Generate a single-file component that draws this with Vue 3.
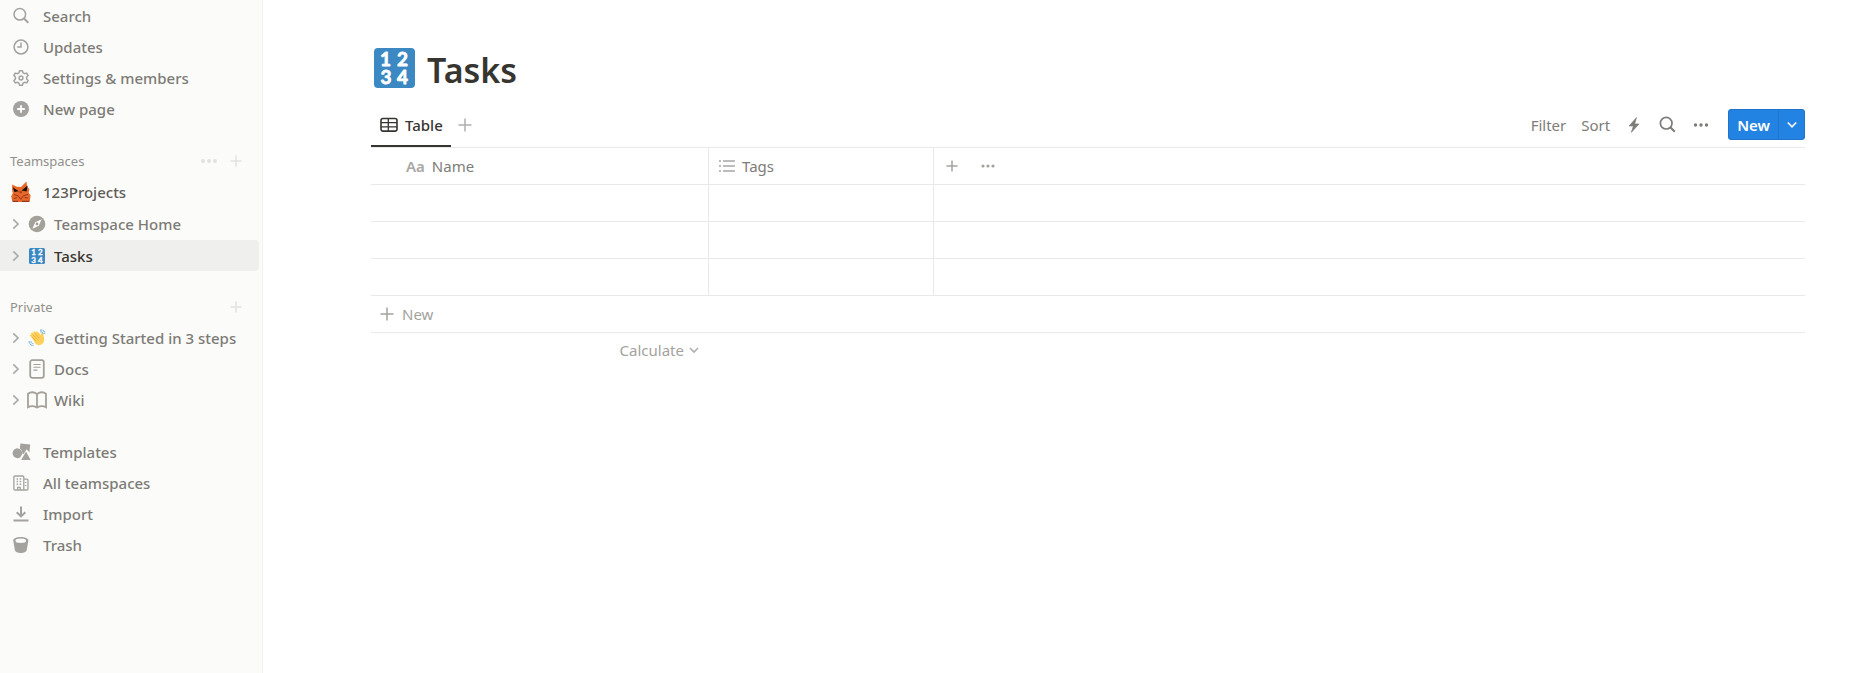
<script setup>
import { ref } from 'vue'

const primary = [
  { label: 'Search', icon: 'search' },
  { label: 'Updates', icon: 'clock' },
  { label: 'Settings & members', icon: 'gear' },
  { label: 'New page', icon: 'plusCircle' },
]
const teamPages = [
  { label: 'Teamspace Home', icon: 'compass' },
  { label: 'Tasks', icon: 'numbers', active: true },
]
const privatePages = [
  { label: 'Getting Started in 3 steps', icon: 'wave' },
  { label: 'Docs', icon: 'doc' },
  { label: 'Wiki', icon: 'book' },
]
const utilities = [
  { label: 'Templates', icon: 'shapes' },
  { label: 'All teamspaces', icon: 'building' },
  { label: 'Import', icon: 'download' },
  { label: 'Trash', icon: 'trash' },
]
const rows = ref([1, 2, 3])
function addRow() {
  rows.value.push(rows.value.length + 1)
}
</script>

<template>
  <div class="app">
    <aside class="sidebar">
      <nav class="group" aria-label="Workspace">
        <a v-for="item in primary" :key="item.label" href="#" class="row link">
          <span class="icon">
            <svg v-if="item.icon === 'search'" width="18" height="18" viewBox="0 0 18 18" class="line">
              <circle cx="7.8" cy="7.3" r="5.8" /><path d="M12 11.500l4.300 4.300" stroke-width="2" />
            </svg>
            <svg v-else-if="item.icon === 'clock'" width="18" height="18" viewBox="0 0 18 18" class="line">
              <circle cx="9" cy="9" r="6.900" /><path d="M9 4.600V9H5.200" />
            </svg>
            <svg v-else-if="item.icon === 'gear'" width="18" height="18" viewBox="0 0 18 18" class="line">
              <path d="M7.600 1.700h2.800l.6 2.100 1.500.9 2.200-.6 1.400 2.400-1.500 1.600v1.800l1.500 1.600-1.400 2.400-2.200-.6-1.500.9-.6 2.100H7.600L7 14.200l-1.500-.9-2.200.6-1.400-2.400 1.500-1.600V8.100L1.900 6.500l1.400-2.400 2.200.6L7 3.800z" stroke-linejoin="round" />
              <circle cx="9" cy="9" r="1.900" />
            </svg>
            <svg v-else width="18" height="18" viewBox="0 0 18 18">
              <circle cx="9" cy="9" r="8" fill="#a3a29e" /><path d="M9 5.200v7.600M5.200 9h7.600" stroke="#fff" stroke-width="1.800" />
            </svg>
          </span>
          <span>{{ item.label }}</span>
        </a>
      </nav>

      <section class="group team" aria-label="Teamspaces">
        <div class="heading">
          <h2>Teamspaces</h2>
          <button type="button" aria-label="Teamspace options">
            <svg width="18" height="14" viewBox="0 0 18 14" fill="currentColor"><circle cx="3" cy="7" r="2" /><circle cx="9" cy="7" r="2" /><circle cx="15" cy="7" r="2" /></svg>
          </button>
          <button type="button" aria-label="Add teamspace">
            <svg width="14" height="14" viewBox="0 0 14 14" class="plus"><path d="M7 1.500v11M1.500 7h11" /></svg>
          </button>
        </div>
        <a href="#" class="row link project">
          <span class="icon">
            <svg width="22" height="22" viewBox="0 0 22 22">
              <path d="M2.200 3.600l4.600 2.200 4.200.2L16.400.6l.7 4.600 2.200 3-.6 3.800 1.900 2.200-.9 6.800H2.400L1.200 15.200l1.600-3L2 8.800z" fill="#e8682c" />
              <path d="M2.800 6.200l6 4-4.400.8zM17.600 4.400l-6 5.200 5 .8z" fill="#161010" />
              <path d="M9.600 10.800h2.200l-1.100 1.400zM4 13.600l4.200 1.200 2.600 3.600 2.600-3.600 4.800-1.400M3.800 17.600l3.200-1M18 17.200l-3.400-.8" fill="none" stroke="#973817" stroke-width="1" />
              <path d="M3 20.400h5M12 20.400h7" stroke="#8d3b1c" stroke-width="1.200" />
            </svg>
          </span>
          <span>123Projects</span>
        </a>
        <div v-for="page in teamPages" :key="page.label" class="row page" :class="{ active: page.active }">
          <button type="button" class="toggle" :aria-label="'Expand ' + page.label">
            <svg width="8" height="12" viewBox="0 0 8 12"><path d="M1.300 1.300L6 6l-4.700 4.700" /></svg>
          </button>
          <a href="#" class="link">
            <span class="page-icon">
              <svg v-if="page.icon === 'compass'" width="18" height="18" viewBox="0 0 18 18">
                <circle cx="9" cy="9" r="8.300" fill="#a4a199" /><path d="M13.600 4.200l-2.800 6.600-6.400 3 2.800-6.600z" fill="#fff" /><circle cx="9" cy="9" r="1.400" fill="#a4a199" />
              </svg>
              <svg v-else width="18" height="18" viewBox="0 0 18 18" class="digits small">
                <rect x="1" y="1" width="16" height="16" rx="1.600" />
                <text x="5.600" y="8.200">1</text><text x="12.400" y="8.200">2</text><text x="5.600" y="15.800">3</text><text x="12.400" y="15.800">4</text>
              </svg>
            </span>
            <span>{{ page.label }}</span>
          </a>
        </div>
      </section>

      <section class="group" aria-label="Private">
        <div class="heading">
          <h2>Private</h2>
          <button type="button" aria-label="Add private page">
            <svg width="14" height="14" viewBox="0 0 14 14" class="plus"><path d="M7 1.500v11M1.500 7h11" /></svg>
          </button>
        </div>
        <div v-for="page in privatePages" :key="page.label" class="row page">
          <button type="button" class="toggle" :aria-label="'Expand ' + page.label">
            <svg width="8" height="12" viewBox="0 0 8 12"><path d="M1.300 1.300L6 6l-4.700 4.700" /></svg>
          </button>
          <a href="#" class="link">
            <span class="page-icon">
              <svg v-if="page.icon === 'wave'" width="18" height="18" viewBox="0 0 18 18">
                <path d="M3 6.600l5 5M4.100 4.500l5 5.400M6.300 3.300l4.600 5.200M8.800 3.400l4 4.600" stroke="#fdd05a" stroke-width="2.100" stroke-linecap="round" />
                <path d="M3.600 8L10.600 3.600l2.400 2.900c.2-1.600.4-3 1.500-2.900 1.100.2.700 2 1.200 3.900.8 3.400.6 6-1.600 7.600-2.200 1.600-4.800 1.400-6.600-.3z" fill="#fdd05a" />
                <path d="M5.200 6l4.200 4.300M7.100 4.700l4 4.200M4.300 8.300l3.500 3.500" stroke="#eba035" stroke-width=".7" stroke-linecap="round" />
                <path d="M12 1.200c2.700-.8 4.800 1 4.800 3.600M12.300 2.900c1.600-.3 2.700.5 2.900 2M1.100 12.200c.2 2.700 1.800 4.300 4.300 4.400M2.900 12.300c.3 1.600 1.200 2.300 2.600 2.500" fill="none" stroke="#55a5e0" stroke-width="1" stroke-dasharray="2.400 .5" />
              </svg>
              <svg v-else-if="page.icon === 'doc'" width="18" height="20" viewBox="0 0 18 20" class="warm">
                <rect x="2.200" y="1.200" width="13.600" height="17.600" rx="2" /><path d="M5.400 5.500h7.200M5.400 8.300h7.200M5.400 11.100h4" stroke-width="1.100" />
              </svg>
              <svg v-else width="20" height="18" viewBox="0 0 20 18" class="warm">
                <path d="M10 3.200C8 .7 3.500.6 1 2.800v13.400c2.700-1.700 7-1.500 9 .4 2-1.900 6.300-2.100 9-.4V2.800C16.500.6 12 .7 10 3.200zM10 3.200v13" />
              </svg>
            </span>
            <span>{{ page.label }}</span>
          </a>
        </div>
      </section>

      <nav class="group" aria-label="Tools">
        <a v-for="item in utilities" :key="item.label" href="#" class="row link">
          <span class="icon">
            <svg v-if="item.icon === 'shapes'" width="20" height="18" viewBox="0 0 20 18" fill="#a3a29e">
              <path d="M9.400.6l9.800 1-.8 8-2.700-3.300-3.300 5-1.200-.8A5.300 5.300 0 0 0 8.800 5.400z" />
              <path d="M6 5.200a5 5 0 1 0 3.100 9.300l2-3.200A5.200 5.200 0 0 0 6 5.200z" /><path d="M15 8.500l4.600 8.500h-9.400z" />
            </svg>
            <svg v-else-if="item.icon === 'building'" width="18" height="18" viewBox="0 0 18 18" class="line">
              <path d="M11.800 16H2.900a1 1 0 0 1-1-1V3a1 1 0 0 1 1-1h7.900a1 1 0 0 1 1 1zM12 5.200h3a1 1 0 0 1 1 1V15a1 1 0 0 1-1 1h-3M5.600 16v-2.600h2.600V16" stroke-width="1.300" />
              <path d="M4.600 4.900h1.500M7.700 4.900h1.500M4.600 7.600h1.500M7.700 7.600h1.500M4.600 10.300h1.500M7.700 10.300h1.500M13.700 8v1M13.700 11v1" stroke-width="1.500" />
            </svg>
            <svg v-else-if="item.icon === 'download'" width="18" height="18" viewBox="0 0 18 18" class="line">
              <path d="M9 1.500v9.600M4.700 7.200L9 11.400l4.300-4.200M1.500 15.400h15" stroke-width="2" />
            </svg>
            <svg v-else width="18" height="18" viewBox="0 0 18 18">
              <path d="M1.200 4.500C1.200 2.300 4.700 1 8.800 1s7.600 1.300 7.600 3.500l-1.700 9.600c-.3 4-11.400 4-11.800 0z" fill="#a3a29e" /><ellipse cx="8.800" cy="4.800" rx="5.300" ry="2.200" fill="#fbfbfa" />
            </svg>
          </span>
          <span>{{ item.label }}</span>
        </a>
      </nav>
    </aside>

    <main class="content">
      <header class="title">
        <svg width="41" height="40" viewBox="0 0 41 40" class="digits">
          <rect x="0" y="0" width="41" height="40" rx="4" />
          <text x="11.500" y="18">1</text><text x="28.500" y="18">2</text><text x="12" y="36">3</text><text x="28.500" y="36">4</text>
        </svg>
        <h1>Tasks</h1>
      </header>

      <div class="toolbar">
        <button type="button" class="tab">
          <svg width="18" height="16" viewBox="0 0 18 16"><rect x="1" y="1.500" width="16" height="12.600" rx="2" /><path d="M1 5.700h16M1 9.900h16M8.300 1.500v12.600" /></svg>
          <span>Table</span>
        </button>
        <button type="button" class="add-view" aria-label="Add view">
          <svg width="14" height="14" viewBox="0 0 14 14" class="plus"><path d="M7 .5v13M.5 7h13" /></svg>
        </button>
        <div class="actions">
          <div class="filters">
            <button type="button">Filter</button>
            <button type="button">Sort</button>
          </div>
          <div class="glyphs">
            <button type="button" aria-label="Automations">
              <svg width="16" height="16" viewBox="0 0 16 16"><path d="M10.500.6L3 9h4.400L5.300 15.400 13 6.900H8.700z" fill="currentColor" stroke="currentColor" stroke-width=".6" stroke-linejoin="round" /></svg>
            </button>
            <button type="button" aria-label="Search table">
              <svg width="17" height="17" viewBox="0 0 17 17" fill="none" stroke="currentColor"><circle cx="7.200" cy="7.200" r="5.800" stroke-width="1.700" /><path d="M11.300 11.300l4.500 4.500" stroke-width="2" /></svg>
            </button>
            <button type="button" aria-label="More options">
              <svg width="16" height="16" viewBox="0 0 16 16" fill="currentColor"><circle cx="2.500" cy="8" r="1.700" /><circle cx="8" cy="8" r="1.700" /><circle cx="13.500" cy="8" r="1.700" /></svg>
            </button>
          </div>
          <div class="new">
            <button type="button" class="new-main">New</button>
            <button type="button" class="new-more" aria-label="Choose template">
              <svg width="10" height="8" viewBox="0 0 10 8"><path d="M.8 1.500L5 5.900l4.200-4.400" /></svg>
            </button>
          </div>
        </div>
      </div>

      <table>
        <colgroup><col class="col-name" /><col class="col-tags" /><col /></colgroup>
        <thead>
          <tr>
            <th scope="col"><div class="head name"><span class="aa" aria-hidden="true">Aa</span>Name</div></th>
            <th scope="col">
              <div class="head tags">
                <svg width="16" height="14" viewBox="0 0 16 14"><path d="M4 2h12M4 7h12M4 12h12M0 2h2M0 7h2M0 12h2" stroke="#a8a7a4" stroke-width="1.300" /></svg>Tags
              </div>
            </th>
            <td>
              <div class="head extra">
                <button type="button" aria-label="Add property"><svg width="12" height="12" viewBox="0 0 12 12" class="plus"><path d="M6 .5v11M.5 6h11" /></svg></button>
                <button type="button" aria-label="Property options"><svg width="14" height="14" viewBox="0 0 14 14" fill="currentColor"><circle cx="2" cy="7" r="1.600" /><circle cx="7" cy="7" r="1.600" /><circle cx="12" cy="7" r="1.600" /></svg></button>
              </div>
            </td>
          </tr>
        </thead>
        <tbody>
          <tr v-for="row in rows" :key="row"><td></td><td></td><td></td></tr>
        </tbody>
        <tfoot>
          <tr>
            <td colspan="3">
              <button type="button" class="new-row" @click="addRow">
                <svg width="14" height="14" viewBox="0 0 14 14" class="plus"><path d="M7 .5v13M.5 7h13" /></svg>New
              </button>
            </td>
          </tr>
          <tr class="totals">
            <td>
              <button type="button" class="calculate">
                Calculate<svg width="10" height="8" viewBox="0 0 10 8"><path d="M1 2l4 4 4-4" fill="none" stroke="#b0afac" stroke-width="1.600" /></svg>
              </button>
            </td>
            <td></td><td></td>
          </tr>
        </tfoot>
      </table>
    </main>
  </div>
</template>

<style>
body {
  margin: 0;
  background: #fff;
}
</style>

<style scoped>
.app {
  display: flex;
  min-height: 100vh;
  font-family: 'Segoe UI', 'Noto Sans', 'Open Sans', sans-serif;
  font-size: 15px;
  line-height: 20px;
  color: #37352f;
}
svg {
  display: block;
  flex: none;
}
button {
  display: flex;
  align-items: center;
  padding: 0;
  border: 0;
  background: none;
  font: inherit;
  color: inherit;
  cursor: pointer;
}
h1, h2 {
  margin: 0;
}
.sidebar {
  flex: none;
  box-sizing: border-box;
  width: 263px;
  padding-right: 3px;
  background: #fbfbfa;
  border-right: 1px solid #f2f2f1;
  font-weight: 500;
  color: #7d7b76;
}
.group {
  margin-bottom: 21px;
}
.group.team {
  margin-bottom: 20px;
}
.row {
  display: flex;
  align-items: center;
  height: 31px;
}
.link {
  display: flex;
  align-items: center;
  color: inherit;
  text-decoration: none;
  white-space: nowrap;
}
.icon {
  display: flex;
  justify-content: center;
  width: 22px;
  margin: 0 11px 0 10px;
}
.line {
  fill: none;
  stroke: #a3a29e;
  stroke-width: 1.5;
}
.warm {
  fill: none;
  stroke: #a4a199;
  stroke-width: 1.8;
}
.plus {
  fill: none;
  stroke: currentColor;
  stroke-width: 1.5;
}
.heading {
  display: flex;
  align-items: center;
  gap: 11px;
  height: 31px;
  padding: 0 16px 0 10px;
  color: #e3e2e0;
}
h2 {
  flex: 1;
  font-size: 13px;
  font-weight: 400;
  color: #91908b;
}
.team .page {
  margin-top: 1px;
}
.link.project {
  color: #5f5d58;
}
.page {
  border-radius: 0 4px 4px 0;
}
.active {
  background: #efefee;
  color: #37352f;
}
.toggle {
  justify-content: center;
  width: 16px;
  height: 24px;
  margin-left: 8px;
}
.toggle path {
  fill: none;
  stroke: #acaba8;
  stroke-width: 1.7;
}
.page-icon {
  display: flex;
  justify-content: center;
  width: 20px;
  margin: 0 7px 0 3px;
}
.digits {
  overflow: visible;
}
.digits rect {
  fill: #3b88c3;
}
.digits text {
  fill: #fff;
  stroke: #fff;
  stroke-width: 0.8;
  stroke-linejoin: round;
  font-family: Lato, sans-serif;
  font-size: 19px;
  font-weight: 700;
  line-height: 18px;
  text-anchor: middle;
}
.small text {
  stroke-width: 0.3;
  font-size: 8px;
  line-height: 8px;
}
.content {
  flex: 1;
  min-width: 0;
  padding: 46px 59px 0 108px;
}
.title {
  display: flex;
  align-items: center;
  gap: 12px;
  height: 48px;
  padding-left: 3px;
}
.title svg {
  margin-bottom: 4px;
}
h1 {
  font-size: 34px;
  line-height: 48px;
  font-weight: 600;
}
.toolbar {
  display: flex;
  align-items: center;
  height: 31px;
  padding: 15px 0 7px;
}
.tab {
  align-self: stretch;
  gap: 7px;
  margin-bottom: -7px;
  padding: 0 8px 5px 9px;
  border-bottom: 2px solid #37352f;
  font-weight: 500;
}
.tab svg {
  fill: none;
  stroke: #37352f;
  stroke-width: 1.6;
}
.tab svg path {
  stroke-width: 1.3;
}
.add-view {
  margin-left: 7px;
  color: #b0afac;
}
.actions, .filters, .glyphs {
  display: flex;
  align-items: center;
}
.actions {
  gap: 16px;
  margin-left: auto;
  color: #7d7c78;
}
.filters {
  gap: 15px;
}
.glyphs {
  gap: 17px;
  margin-right: 3px;
}
.new {
  display: flex;
  height: 31px;
  border-radius: 4px;
  background: #2383e2;
  box-shadow: inset 0 0 0 1px #1f75ca;
  color: #fff;
  overflow: hidden;
}
.new-main {
  padding: 0 8px 0 9px;
  font-weight: 600;
}
.new-more {
  justify-content: center;
  width: 27px;
  border-left: 1px solid #1f75ca;
}
.new-more path {
  fill: none;
  stroke: #fff;
  stroke-width: 1.6;
}
table {
  width: 100%;
  table-layout: fixed;
  border-collapse: separate;
  border-spacing: 0;
  border-top: 1px solid #e9e9e7;
}
.col-name {
  width: 338px;
}
.col-tags {
  width: 225px;
}
th, td {
  box-sizing: border-box;
  height: 37px;
  padding: 0;
  border-bottom: 1px solid #e9e9e7;
  font-weight: 400;
  text-align: left;
}
thead th, tbody td:not(:last-child) {
  border-right: 1px solid #e9e9e7;
}
.head {
  display: flex;
  align-items: center;
  color: #7d7c78;
}
.name {
  gap: 7px;
  padding-left: 35px;
}
.aa {
  font-weight: 600;
  color: #a8a7a4;
}
.tags {
  gap: 7px;
  padding-left: 10px;
}
.extra {
  gap: 23px;
  padding-left: 12px;
  color: #a3a29e;
}
.new-row {
  gap: 8px;
  padding-left: 9px;
  color: #a3a29e;
}
.totals td {
  height: 34px;
  border: 0;
}
.calculate {
  gap: 5px;
  margin-left: auto;
  padding-right: 10px;
  color: #a3a29e;
}
</style>
